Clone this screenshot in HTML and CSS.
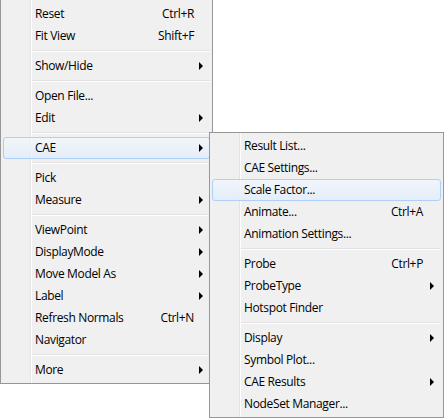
FILE: index.html
```html
<!DOCTYPE html>
<html>
<head>
<meta charset="utf-8">
<link rel="stylesheet" href="styles.css">
</head>
<body>
<div class="menu main">
  <div class="item"><span class="label">Reset</span><span class="key">Ctrl+R</span><span class="slot"></span></div>
  <div class="item"><span class="label">Fit View</span><span class="key">Shift+F</span><span class="slot"></span></div>
  <div class="sep"></div>
  <div class="item"><span class="label">Show/Hide</span><span class="slot"><i class="arrow"></i></span></div>
  <div class="sep"></div>
  <div class="item"><span class="label">Open File...</span><span class="slot"></span></div>
  <div class="item"><span class="label">Edit</span><span class="slot"><i class="arrow"></i></span></div>
  <div class="sep"></div>
  <div class="item hot"><span class="label">CAE</span><span class="slot"><i class="arrow"></i></span></div>
  <div class="sep"></div>
  <div class="item"><span class="label">Pick</span><span class="slot"></span></div>
  <div class="item"><span class="label">Measure</span><span class="slot"><i class="arrow"></i></span></div>
  <div class="sep"></div>
  <div class="item"><span class="label">ViewPoint</span><span class="slot"><i class="arrow"></i></span></div>
  <div class="item"><span class="label">DisplayMode</span><span class="slot"><i class="arrow"></i></span></div>
  <div class="item"><span class="label">Move Model As</span><span class="slot"><i class="arrow"></i></span></div>
  <div class="item"><span class="label">Label</span><span class="slot"><i class="arrow"></i></span></div>
  <div class="item"><span class="label">Refresh Normals</span><span class="key">Ctrl+N</span><span class="slot"></span></div>
  <div class="item"><span class="label">Navigator</span><span class="slot"></span></div>
  <div class="sep"></div>
  <div class="item"><span class="label">More</span><span class="slot"><i class="arrow"></i></span></div>
</div>
<div class="menu submenu">
  <div class="item"><span class="label">Result List...</span><span class="slot"></span></div>
  <div class="item"><span class="label">CAE Settings...</span><span class="slot"></span></div>
  <div class="item hot"><span class="label">Scale Factor...</span><span class="slot"></span></div>
  <div class="item"><span class="label">Animate...</span><span class="key">Ctrl+A</span><span class="slot"></span></div>
  <div class="item"><span class="label">Animation Settings...</span><span class="slot"></span></div>
  <div class="sep"></div>
  <div class="item"><span class="label">Probe</span><span class="key">Ctrl+P</span><span class="slot"></span></div>
  <div class="item"><span class="label">ProbeType</span><span class="slot"><i class="arrow"></i></span></div>
  <div class="item"><span class="label">Hotspot Finder</span><span class="slot"></span></div>
  <div class="sep"></div>
  <div class="item"><span class="label">Display</span><span class="slot"><i class="arrow"></i></span></div>
  <div class="item"><span class="label">Symbol Plot...</span><span class="slot"></span></div>
  <div class="item"><span class="label">CAE Results</span><span class="slot"><i class="arrow"></i></span></div>
  <div class="item"><span class="label">NodeSet Manager...</span><span class="slot"></span></div>
</div>
</body>
</html>
```
FILE: styles.css
```css
html, body {
  margin: 0;
  padding: 0;
  background: #ffffff;
  width: 445px;
  height: 419px;
  overflow: hidden;
  position: relative;
}

.menu {
  position: absolute;
  box-sizing: border-box;
  background: #f0f0f0;
  border: 1px solid #979797;
  padding: 2px;
  font-family: "Open Sans", "Noto Sans", sans-serif;
  font-size: 12px;
  letter-spacing: -0.35px;
  color: #000;
}

.menu::before {
  content: "";
  position: absolute;
  top: 0;
  bottom: 0;
  left: 29px;
  width: 1px;
  background: #e2e3e3;
  border-right: 1px solid #ffffff;
}

.main {
  left: 0;
  top: -1px;
  width: 213px;
  height: 385px;
  padding-top: 3px;
}

.submenu {
  left: 209px;
  top: 132px;
  width: 235px;
  height: 286px;
}

.item {
  position: relative;
  display: flex;
  align-items: center;
  height: 22px;
  box-sizing: border-box;
  border: 1px solid transparent;
  border-radius: 3px;
  padding-left: 31px;
  line-height: 20px;
}

.item.hot {
  border-color: #aecff7;
  background: linear-gradient(to bottom, rgba(242, 247, 253, 0.85), rgba(226, 236, 250, 0.85));
}

.label {
  flex: 1;
  white-space: nowrap;
}

.key {
  white-space: nowrap;
}

.slot {
  width: 15px;
  display: flex;
  align-items: center;
  height: 20px;
}

.submenu .slot {
  width: 17px;
}

.arrow {
  display: block;
  width: 0;
  height: 0;
  margin-left: 5px;
  border-left: 4px solid #000;
  border-top: 4px solid transparent;
  border-bottom: 4px solid transparent;
}

.submenu .arrow {
  margin-left: 7px;
}

.sep {
  height: 8px;
  box-sizing: border-box;
  margin-left: 28px;
  padding-top: 3px;
}

.sep::after {
  content: "";
  display: block;
  height: 1px;
  background: #e0e0e0;
  border-bottom: 1px solid #ffffff;
}
```
